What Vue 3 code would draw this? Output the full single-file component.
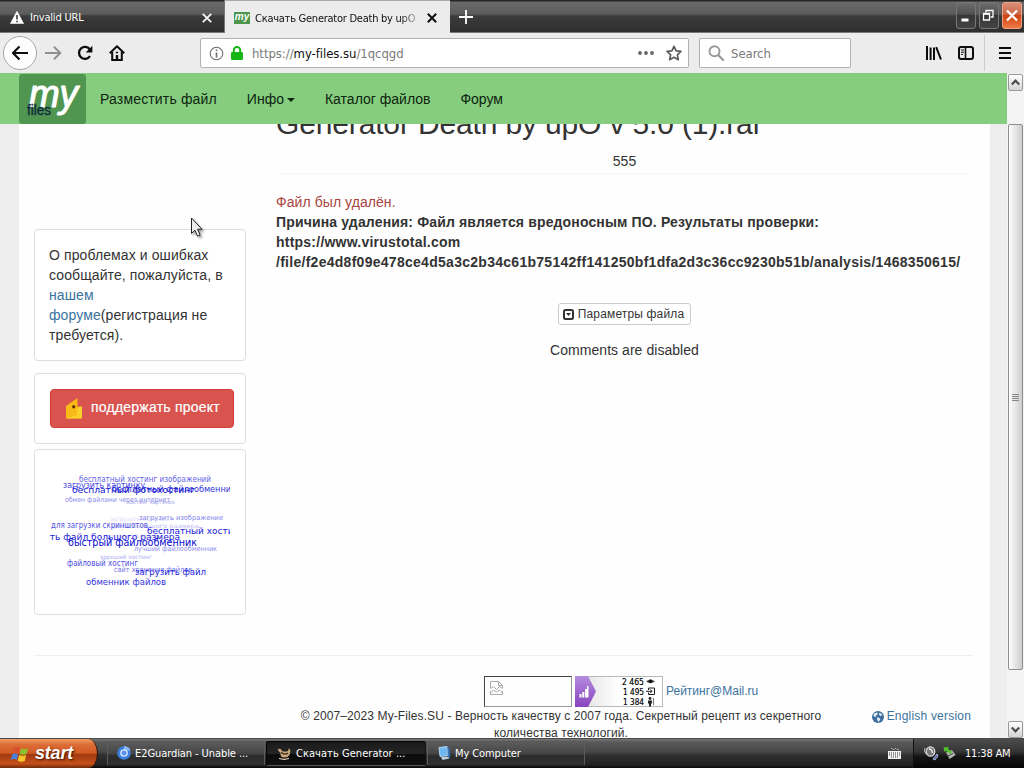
<script setup>
import { ref } from "vue";

const clock = ref("11:38 AM");

const navLinks = [
  { label: "Разместить файл" },
  { label: "Инфо", dropdown: true },
  { label: "Каталог файлов" },
  { label: "Форум" },
];

// tag cloud, far tags first
const tags = [
  { text: "загрузить скриншот", x: 60, y: 56, w: 62, size: 6, color: "#dcdcfb" },
  { text: "файл большого размера", x: 62, y: 63, w: 87, size: 6, color: "#bcbcf3" },
  { text: "хостинг файлов", x: 56, y: 73, w: 52, size: 6, color: "#d2d2f9" },
  { text: "хороший хостинг", x: 50, y: 94, w: 52, size: 6, color: "#b0b0ee" },
  { text: "хостинг картинок", x: 77, y: 39, w: 48, size: 6, color: "#a4a4e6" },
  { text: "обмен файлами через интернет", x: 15, y: 37, w: 105, size: 7, color: "#8c8cea" },
  { text: "загрузить изображение", x: 89, y: 55, w: 84, size: 7, color: "#8585ea" },
  { text: "лучший файлообменник", x: 84, y: 86, w: 83, size: 7, color: "#8c8cec" },
  { text: "сайт хранения файлов", x: 64, y: 107, w: 78, size: 7.5, color: "#7474e8" },
  { text: "бесплатный хостинг изображений", x: 29, y: 17, w: 132, size: 8, color: "#6464e8" },
  { text: "загрузить картинку", x: 13, y: 23, w: 82, size: 8, color: "#4646e4" },
  { text: "для загрузки скриншотов", x: 1, y: 63, w: 97, size: 8, color: "#5252e4" },
  { text: "файловый хостинг", x: 17, y: 101, w: 71, size: 8, color: "#4d4de6" },
  { text: "обменник файлов", x: 36, y: 120, w: 80, size: 9, color: "#3232e0" },
  { text: "бесплатный файлообменник", x: 62, y: 27, w: 124, size: 8.5, color: "#3030dd" },
  { text: "бесплатный хостинг", x: 97, y: 69, w: 97, size: 9, color: "#2020dc" },
  { text: "загрузить файл", x: 85, y: 110, w: 71, size: 9, color: "#1c1cdd" },
  { text: "загрузить файл большого размера", x: -37, y: 75, w: 167, size: 9.5, color: "#2020d8" },
  { text: "бесплатный фотохостинг", x: 22, y: 28, w: 123, size: 9.5, color: "#1010cc" },
  { text: "быстрый файлообменник", x: 18, y: 81, w: 129, size: 10, color: "#0808d0" },
];
</script>

<template>
  <div class="desktop">
    <!-- tabs -->
    <div class="tabbar">
      <div class="tab tab-idle">
        <svg class="tab-warn" width="14" height="13" viewBox="0 0 14 13">
          <path d="M7 .3 13.6 12.6H.4z" fill="#fff" stroke="#fff" stroke-width=".6" stroke-linejoin="round" />
          <path d="M7 4v4.5M7 9.7v1.6" stroke="#444" stroke-width="1.7" />
        </svg>
        <span class="tab-title">Invalid URL</span>
        <svg class="tab-close" width="10" height="10" viewBox="0 0 10 10">
          <path d="m.8.8 8.4 8.4M9.2.8.8 9.2" stroke="#fff" stroke-width="1.7" />
        </svg>
      </div>
      <div class="tab tab-active">
        <span class="favicon">my</span>
        <span class="tab-title fade">Скачать Generator Death by upO</span>
        <svg class="tab-close" width="10" height="10" viewBox="0 0 10 10">
          <path d="m.8.8 8.4 8.4M9.2.8.8 9.2" stroke="#111" stroke-width="2" />
        </svg>
      </div>
      <svg class="tab-new" width="14" height="14" viewBox="0 0 14 14">
        <path d="M7 0v14M0 7h14" stroke="#fff" stroke-width="1.8" />
      </svg>
      <div class="win-buttons">
        <span class="win-btn">
          <svg width="18" height="25" viewBox="0 0 18 25"><path d="M4.500 17h7" stroke="#fff" stroke-width="3" /></svg>
        </span>
        <span class="win-btn">
          <svg width="18" height="25" viewBox="0 0 18 25" fill="none" stroke="#fff">
            <path d="M3.500 10.500h6v6.500h-6z" stroke-width="1.300" />
            <path d="M3 11h7" stroke-width="1.600" />
            <path d="M6 9.500V7.500h7v6.500H10.500" stroke-width="1.300" />
          </svg>
        </span>
        <span class="win-btn win-close">
          <svg width="18" height="25" viewBox="0 0 18 25"><path d="m4 7.500 10 10M14 7.500l-10 10" stroke="#fff" stroke-width="2.200" /></svg>
        </span>
      </div>
    </div>

    <!-- toolbar -->
    <div class="toolbar">
      <div class="back">
        <svg width="18" height="16" viewBox="0 0 18 16" fill="none" stroke="#0c0c0d" stroke-width="2.200">
          <path d="M17 8H2.500M8.500 1.500 2 8l6.500 6.500" stroke-linejoin="round" />
        </svg>
      </div>
      <svg class="forward" width="17" height="16" viewBox="0 0 17 16" fill="none" stroke="#919191" stroke-width="2">
        <path d="M0 8h15M9 1.700 15.300 8 9 14.300" />
      </svg>
      <svg class="reload" width="16" height="16" viewBox="0 0 16 16" fill="none" stroke="#0c0c0d" stroke-width="2.300">
        <path d="M13 11.200A6 6 0 1 1 13 4.500" />
        <path d="M15.400 .8v6.700H8.700z" fill="#0c0c0d" stroke="none" />
      </svg>
      <svg class="home" width="16" height="16" viewBox="0 0 16 16" fill="none" stroke="#0c0c0d" stroke-width="2">
        <path d="M.8 8.200 8 1.200l7.200 7" stroke-linejoin="round" />
        <path d="M3.200 7v8h9.600V7" />
        <path d="M8 10v5" stroke-width="2.400" />
        <path d="M6.800 7.500h2.400" stroke-width="1.500" />
      </svg>
      <div class="urlbar">
        <svg width="15" height="15" viewBox="0 0 15 15" fill="none" stroke="#6d6d6d">
          <circle cx="7.500" cy="7.500" r="6.300" stroke-width="1.100" />
          <path d="M7.500 6.400v5M7.500 3.500v1.600" stroke-width="1.600" />
        </svg>
        <svg class="lock" width="12" height="14" viewBox="0 0 12 14">
          <rect y="6" width="12" height="8" rx="1.200" fill="#16b616" />
          <path d="M2.800 7V4.200a3.200 3.200 0 0 1 6.400 0V7" fill="none" stroke="#16b616" stroke-width="2" />
        </svg>
        <span class="url">https://<b>my-files.su</b>/1qcqgd</span>
        <svg class="dots" width="16" height="4" viewBox="0 0 16 4" fill="#666">
          <circle cx="2" cy="2" r="1.900" /><circle cx="8" cy="2" r="1.900" /><circle cx="14" cy="2" r="1.900" />
        </svg>
        <svg width="16" height="16" viewBox="0 0 16 16">
          <path d="m8 1.300 2.100 4.500 4.800.6-3.500 3.400.9 4.900L8 12.300l-4.300 2.400.9-4.900L1.100 6.400l4.800-.6z" fill="none" stroke="#5c5c5c" stroke-width="1.700" stroke-linejoin="round" />
        </svg>
      </div>
      <div class="searchbar">
        <svg width="17" height="17" viewBox="0 0 17 17" fill="none" stroke="#999">
          <circle cx="6.500" cy="6.300" r="5" stroke-width="1.900" />
          <path d="m10.200 10 5.500 5.500" stroke-width="2.300" />
        </svg>
        <span>Search</span>
      </div>
      <div class="tools">
        <svg width="16" height="14" viewBox="0 0 16 14" stroke="#0c0c0d" stroke-width="2">
          <path d="M1 0v14M4.600 1.500V14M8 1.500V14M10.200 1.200 15 13.500" />
        </svg>
        <svg class="reader" width="16" height="14" viewBox="0 0 16 14" fill="none" stroke="#0c0c0d">
          <rect x="1" y="1" width="14" height="12" rx="2" stroke-width="2" />
          <path d="M7.500 1v12" stroke-width="1.600" />
          <path d="M3 4h3M3 6.200h3M3 8.400h2" stroke-width="1" />
        </svg>
        <span class="divider"></span>
        <svg width="12" height="12" viewBox="0 0 12 12" stroke="#0c0c0d" stroke-width="2">
          <path d="M0 1h12M0 6h12M0 11h12" />
        </svg>
      </div>
    </div>

    <!-- page -->
    <div class="viewport">
      <div class="page">
        <nav class="navbar">
          <div class="logo">
            <svg width="67" height="50" viewBox="0 0 67 50">
              <text x="10" y="33" class="logo-my" textLength="49" lengthAdjust="spacingAndGlyphs">my</text>
              <text x="8" y="41" class="logo-files" textLength="24" lengthAdjust="spacingAndGlyphs">files</text>
            </svg>
          </div>
          <a v-for="link in navLinks" :key="link.label" class="nav-link">
            {{ link.label }}<i v-if="link.dropdown" class="caret"></i>
          </a>
        </nav>

        <div class="container">
          <div class="columns">
            <aside class="sidebar">
              <div class="card note">
                О проблемах и ошибках сообщайте, пожалуйста, в <a>нашем форуме</a>(регистрация не требуется).
              </div>
              <div class="card donate">
                <div class="btn-donate">
                  <svg width="18" height="23" viewBox="0 0 18 23">
                    <path d="M1 9 12.500 1v9H17v11.500H1z" fill="#f9b916" />
                    <path d="M12.500 10 17 9.300V21l-4.500.5H1L12 18z" fill="#fbd02b" />
                    <ellipse cx="8.700" cy="9.700" rx="1.500" ry="1.800" fill="#5a2c08" />
                  </svg>
                  <span>поддержать проект</span>
                </div>
              </div>
              <div class="card cloud">
                <svg width="180" height="134" viewBox="0 0 180 134">
                  <text
                    v-for="tag in tags"
                    :key="tag.text"
                    :x="tag.x"
                    :y="tag.y"
                    :textLength="tag.w"
                    :font-size="tag.size"
                    :fill="tag.color"
                    lengthAdjust="spacingAndGlyphs"
                  >{{ tag.text }}</text>
                </svg>
              </div>
            </aside>
            <main class="content">
              <h2>Generator Death by upO v 5.0 (1).rar</h2>
              <div class="count"><span>555</span></div>
              <p class="reason">
                <span class="danger">Файл был удалён.</span><br />
                <b class="why">Причина удаления: Файл является вредоносным ПО. Результаты проверки:</b><br />
                <b class="host">https://www.virustotal.com</b><br />
                <b class="path">/file/f2e4d8f09e478ce4d5a3c2b34c61b75142ff141250bf1dfa2d3c36cc9230b51b/analysis/1468350615/</b>
              </p>
              <div class="btn-params">
                <svg width="11" height="11" viewBox="0 0 11 11">
                  <rect x="1" y="1" width="9" height="9" rx="1.500" fill="none" stroke="#333" stroke-width="2" />
                  <path d="M3 4h5L5.500 7z" fill="#333" />
                </svg>
                Параметры файла
              </div>
              <p class="comments">Comments are disabled</p>
            </main>
          </div>
          <footer class="footer">
            <div class="footer-center">
              <div class="counters">
                <div class="broken">
                  <svg width="13" height="14" viewBox="0 0 13 14" fill="none" stroke="#aaa">
                    <path d="M.5 7V.5h8l4 4V7M8.500.5v4h4M.5 7.500l3-2 3 3 3-3 3 2M.5 12l3-3 3 2 3-2 3 3M.5 10v3.500h12V10" />
                  </svg>
                </div>
                <svg class="rating" width="88" height="31" viewBox="0 0 88 31">
                  <defs>
                    <linearGradient id="violet" x2="0" y2="1">
                      <stop offset="0" stop-color="#b48ce0" /><stop offset="1" stop-color="#8843bd" />
                    </linearGradient>
                    <linearGradient id="silver" x2="1" y2="0">
                      <stop offset="0" stop-color="#dedede" /><stop offset=".5" stop-color="#fff" />
                    </linearGradient>
                  </defs>
                  <rect x=".5" y=".5" width="87" height="30" fill="url(#silver)" stroke="#b8b8b8" />
                  <path d="M0 0h13l8 15.500L13 31H0z" fill="url(#violet)" />
                  <path d="M4.500 18h2v3.500h-2zM7.300 16h2v5.500h-2zM10.100 13h2v8.500h-2zM12 10h1.500v11.500H12z" fill="#fff" />
                  <g class="rating-num">
                    <text x="47" y="9" textLength="22" lengthAdjust="spacingAndGlyphs">2 465</text>
                    <text x="48" y="19" textLength="21" lengthAdjust="spacingAndGlyphs">1 495</text>
                    <text x="48" y="29" textLength="21" lengthAdjust="spacingAndGlyphs">1 384</text>
                  </g>
                  <path d="M71 5.500q4.500-4 9 0-4.500 3.500-9 0z" fill="#555" />
                  <circle cx="75.500" cy="5.200" r="1.800" fill="#111" />
                  <path d="M73.500 14v-2h6v6.500h-6v-2M71 15.300h6M75 13.300l2 2-2 2" fill="none" stroke="#222" />
                  <circle cx="75" cy="22.500" r="1.400" fill="#222" />
                  <path d="M73 24.500h4v3h-1v3h-2v-3h-1z" fill="#222" />
                  <path d="M78.500 22v7" stroke="#777" />
                </svg>
                <a>Рейтинг@Mail.ru</a>
              </div>
              <div class="copyright">© 2007–2023 My-Files.SU - Верность качеству с 2007 года. Секретный рецепт из секретного количества технологий.</div>
            </div>
            <a class="lang">
              <svg width="12" height="12" viewBox="0 0 12 12">
                <circle cx="6" cy="6" r="6" fill="#3c6f9d" />
                <path d="m2 2.500 3-1 1.200 1.300-1.500 1-.5 1.500L2.500 6 1.500 4.500zM7.500 1.500l3 2.500-1.800 1-1.700-1zM5 6.300l2.500.7.800 1.500L6.500 11 5.200 9z" fill="#e5f0f7" />
              </svg>
              English version
            </a>
          </footer>
        </div>
      </div>
      <div class="scrollbar">
        <div class="scroll-btn">
          <svg width="9" height="7" viewBox="0 0 9 7"><path d="m.8 5.500 3.700-3.800 3.700 3.800" fill="none" stroke="#4b4b4b" stroke-width="2.200" /></svg>
        </div>
        <div class="thumb"><i></i><i></i><i></i><i></i></div>
        <div class="scroll-btn scroll-down">
          <svg width="9" height="7" viewBox="0 0 9 7"><path d="m.8 1.500 3.700 3.800 3.700-3.800" fill="none" stroke="#4b4b4b" stroke-width="2.200" /></svg>
        </div>
      </div>
    </div>

    <!-- taskbar -->
    <div class="taskbar">
      <div class="start">
        <svg width="20" height="18" viewBox="0 0 20 18">
          <path d="M4 3q3-2 6 0L8.500 8.300q-3-1.800-6 0z" fill="#d9512c" />
          <path d="M11 3.500q3 1.500 7 0L16.500 9q-3.500 1.500-7 0z" fill="#8cc12f" />
          <path d="M2.200 9.500q3-1.800 6 0L6.800 15q-3-1.800-6.200 0z" fill="#4c7ed8" />
          <path d="M9.200 10q3.500 1.600 7 0L14.800 16q-3.700 1.500-7.200-.3z" fill="#f4c528" />
        </svg>
        <span>start</span>
      </div>
      <div class="task">
        <svg width="14" height="14" viewBox="0 0 14 14">
          <circle cx="7" cy="7" r="6.800" fill="#3d7ddb" />
          <path d="M7 0a7 7 0 0 1 6.500 4.500H7z" fill="#89b7f7" />
          <circle cx="7" cy="7" r="3.200" fill="#5c93ea" stroke="#dce9ff" stroke-width="1.300" />
        </svg>
        <span class="t1">E2Guardian - Unable ...</span>
      </div>
      <div class="task task-active">
        <svg width="15" height="14" viewBox="0 0 15 14" fill="none">
          <path d="M1 3q3-1 4 2 3 1 6 0l1-3 1.500 3-1 4q-2 3-6 2.500Q3 11 3.500 7 1 5.500 1 3z" fill="#c9a77c" />
          <path d="M4 6.500q4 3 7 .5M4 11.500q3 2.500 7 0" stroke="#3c2716" stroke-width="1.400" />
          <path d="M2 12.500q5 2 10 0" stroke="#efe0ca" />
        </svg>
        <span class="t2">Скачать Generator ...</span>
      </div>
      <div class="task task-computer">
        <svg width="13" height="15" viewBox="0 0 13 15">
          <path d="m1 1.500 8-1 1 9-8 1z" fill="#6db9f3" stroke="#c8e3fa" stroke-width=".8" />
          <path d="m9.500 1 2 1 .5 9-2 2z" fill="#3575b8" />
          <path d="m3 11 6-.5 2.500 2-7 1.500z" fill="#bcd0e5" />
        </svg>
        <span class="t3">My Computer</span>
      </div>
      <svg class="keyboard" width="13" height="12" viewBox="0 0 13 12">
        <path d="M3 1.500h1l1 1h1l1-1h1l1 1h2" fill="none" stroke="#ccc" stroke-width=".7" />
        <rect y="4" width="13" height="8" fill="#f2f2f2" />
        <path d="M1 6h11M1 8h11M3 10h7" stroke="#333" stroke-dasharray="1 1" />
      </svg>
      <div class="tray">
        <svg width="15" height="15" viewBox="0 0 15 15" fill="none">
          <ellipse cx="6.500" cy="5.500" rx="4.300" ry="4.700" fill="#777" stroke="#ddd" stroke-width="1.200" />
          <path d="M5 3q3 0 3.500 4" stroke="#eee" stroke-width="1.300" />
          <path d="M1 2Q-.5 5 2 8" stroke="#bbb" />
          <path d="m9 13 4-5 1 2-3 4z" fill="#5864b4" stroke="#d9def8" stroke-width=".7" />
        </svg>
        <svg width="13" height="14" viewBox="0 0 13 14">
          <path d="m3 6 6-2 3.500 5-6 4z" fill="#b9c0b6" stroke="#636a60" stroke-width=".7" />
          <path d="m5 10 5-2.500" stroke="#333" />
          <path d="M.5 1.500 6 .8 4.800 2.500 9 6 7 8 3 4.500 1.500 6z" fill="#4ec12d" />
        </svg>
        <span>{{ clock }}</span>
      </div>
    </div>

    <svg class="cursor" width="13" height="22" viewBox="0 0 13 22">
      <path d="M1.500 1v15.500l3.400-3.300 2.600 6 2.600-1.200-2.500-5.700H12z" fill="#eee" stroke="#222" />
    </svg>
  </div>
</template>

<style>
body {
  margin: 0;
  overflow: hidden;
}
</style>

<style scoped>
.desktop {
  position: relative;
  width: 1024px;
  height: 768px;
  overflow: hidden;
  font-family: "Liberation Sans", Arial, sans-serif;
  color: #333;
}

.desktop * {
  box-sizing: border-box;
}

svg {
  display: block;
  flex: none;
}

/* ---- tabs ---- */
.tabbar {
  display: flex;
  align-items: center;
  height: 33px;
  background: linear-gradient(#252525 0, #252525 1px, #696969 2px, #5c5c5c 14px, #3c3c3c 16px, #2e2e2e 32px, #c5c5c5 33px);
}

.tab {
  display: flex;
  align-items: center;
  height: 33px;
  font: 11px "DejaVu Sans Condensed", "DejaVu Sans", sans-serif;
  white-space: nowrap;
}

.tab-idle {
  width: 225px;
  padding: 2px 12px 0 10px;
  color: #fff;
  border-right: 1px solid #777;
}

.tab-idle .tab-title {
  margin-left: 6px;
  letter-spacing: -0.2px;
}

.tab-active {
  width: 225px;
  padding: 2px 13px 0 9px;
  background: #ececec;
  border-top: 1px solid #aaa;
  color: #111;
}

.favicon {
  width: 16px;
  height: 12px;
  margin-right: 5px;
  background: #4b964c;
  color: #fff;
  font: italic bold 10px/9px "Liberation Sans", sans-serif;
  text-align: center;
}

.fade {
  width: 165px;
  overflow: hidden;
  letter-spacing: -0.25px;
  -webkit-mask-image: linear-gradient(90deg, #000 145px, transparent 168px);
  mask-image: linear-gradient(90deg, #000 145px, transparent 168px);
}

.tab-close {
  margin-left: auto;
}

.tab-new {
  margin-left: 9px;
}

.win-buttons {
  display: flex;
  gap: 3px;
  margin: 0 2px 2px auto;
}

.win-btn {
  width: 20px;
  height: 27px;
  border: 1px solid #777;
  border-radius: 3px;
  background: linear-gradient(#6c6c6c, #505050 45%, #363636 50%, #444);
}

.win-close {
  border-color: #f0a080;
  background: linear-gradient(#d98f78, #cc6848 45%, #cd4313 50%, #ee7a45);
}

/* ---- toolbar ---- */
.toolbar {
  display: flex;
  align-items: center;
  height: 40px;
  padding: 0 13px 0 3px;
  background: #ececec;
  font: 13px "DejaVu Sans Condensed", "DejaVu Sans", sans-serif;
}

.back {
  display: flex;
  align-items: center;
  justify-content: center;
  width: 34px;
  height: 34px;
  border: 1px solid #a8a8a8;
  border-radius: 50%;
  background: #fdfdfd;
}

.forward {
  margin-left: 8px;
}

.reload {
  margin-left: 15px;
}

.home {
  margin-left: 16px;
}

.urlbar,
.searchbar {
  display: flex;
  align-items: center;
  height: 30px;
  border: 1px solid #b1b1b1;
  border-radius: 2px;
  background: #fff;
  color: #7a7a7a;
}

.urlbar {
  width: 489px;
  margin-left: 75px;
  padding: 0 6px 0 8px;
}

.lock {
  margin: 0 9px 1px 7px;
}

.url {
  letter-spacing: -0.05px;
}

.url b {
  font-weight: normal;
  color: #111;
}

.dots {
  margin: 0 12px 0 auto;
}

.searchbar {
  width: 152px;
  margin-left: 10px;
  padding-left: 8px;
}

.searchbar span {
  margin-left: 6px;
  letter-spacing: -0.05px;
}

.tools {
  display: flex;
  align-items: center;
  margin-left: auto;
}

.reader {
  margin: 0 10px 0 16px;
}

.divider {
  width: 1px;
  height: 36px;
  margin-right: 14px;
  background: #ccc;
}

/* ---- page ---- */
.viewport {
  display: flex;
  height: 665px;
}

.page {
  position: relative;
  width: 1007px;
  overflow: hidden;
  background: #eee;
  font-size: 14px;
  line-height: 20px;
}

.page a {
  color: #3a739f;
}

/* fixed over the scrolled content */
.navbar {
  position: absolute;
  top: 0;
  left: 0;
  z-index: 1;
  display: flex;
  align-items: center;
  width: 100%;
  height: 51px;
  padding-left: 19px;
  background: #86cd80;
}

.logo {
  width: 67px;
  height: 50px;
  margin-right: -1px;
  border-radius: 3px;
  background: #509650;
}

.logo-my {
  font: italic 38px "Liberation Sans", sans-serif;
  fill: #fff;
  stroke: #fff;
  stroke-width: 1.2px;
  stroke-linejoin: round;
}

.logo-files {
  font: 14px "Liberation Sans", sans-serif;
  fill: #102d3e;
  stroke: #102d3e;
  stroke-width: 0.4px;
}

.page .nav-link {
  display: flex;
  align-items: center;
  padding: 0 15px 0 15px;
  color: #0d240d;
}

.page .nav-link:first-of-type {
  letter-spacing: 0.16px;
}

.caret {
  margin: 3px 0 0 3px;
  border: 4px solid transparent;
  border-top-color: #0d240d;
  border-bottom: 0;
}

.container {
  width: 971px;
  height: 665px;
  margin-left: 19px;
  padding: 0 17px 0 15px;
  background: #fefefe;
}

.columns {
  display: flex;
  gap: 30px;
  height: 582px;
}

.sidebar {
  width: 212px;
  padding-top: 156px;
}

.card {
  border: 1px solid #ddd;
  border-radius: 4px;
  padding: 15px;
  background: #fff;
}

.note {
  height: 132px;
  margin-bottom: 12px;
  padding-left: 14px;
  letter-spacing: 0.1px;
}

.donate {
  height: 71px;
  margin-bottom: 5px;
}

.btn-donate {
  display: flex;
  align-items: center;
  gap: 8px;
  width: 184px;
  height: 39px;
  padding-left: 14px;
  border: 1px solid #d43f3a;
  border-radius: 4px;
  background: #d9534f;
  color: #fff;
  white-space: nowrap;
  letter-spacing: 0.23px;
  -webkit-text-stroke: 0.2px #fff;
}

.btn-donate span {
  padding-bottom: 3px;
}

.cloud {
  height: 166px;
}

.cloud text {
  font-family: "DejaVu Sans", sans-serif;
}

.content {
  display: flex;
  flex-direction: column;
  align-items: center;
  width: 697px;
  padding-top: 34px;
}

.content h2 {
  align-self: flex-start;
  margin: 0;
  font-size: 30px;
  font-weight: normal;
  line-height: 33px;
  letter-spacing: -0.15px;
}

.count {
  width: 688px;
  height: 34px;
  margin: 11px 0 18px;
  text-align: center;
  background: linear-gradient(#f5f5f5, #f5f5f5) 0 22px / 100% 1px no-repeat;
}

.count span {
  display: inline-block;
  padding: 0 6px;
  background: #fefefe;
}

.reason {
  align-self: flex-start;
  height: 80px;
  margin: -11px 0 31px;
  white-space: nowrap;
}

.danger {
  color: #a94442;
  letter-spacing: 0.07px;
}

.why {
  letter-spacing: 0.15px;
}

.host {
  letter-spacing: 0.23px;
}

.path {
  letter-spacing: 0.276px;
}

.btn-params {
  display: flex;
  align-items: center;
  gap: 4px;
  height: 22px;
  padding: 0 6px 0 4px;
  border: 1px solid #ccc;
  border-radius: 3px;
  background: #fff;
  font-size: 12px;
  letter-spacing: 0.15px;
}

.comments {
  margin: 15px 0 0;
  letter-spacing: 0.05px;
}

.footer {
  display: flex;
  height: 83px;
  padding-top: 20px;
  border-top: 1px solid #eee;
  font-size: 12px;
  line-height: 17px;
}

.footer-center {
  width: 556px;
  margin-left: 249px;
}

.counters {
  display: flex;
  align-items: center;
  gap: 3px;
  height: 31px;
  margin-left: 201px;
}

.broken {
  width: 88px;
  height: 31px;
  padding: 4px 5px;
  border: 1px solid #999;
  border-top-color: #444;
  border-left-color: #444;
}

.rating-num {
  font: 9px "DejaVu Sans", sans-serif;
  fill: #000;
  stroke: #000;
  stroke-width: 0.2px;
}

.copyright {
  padding-top: 1px;
  text-align: center;
  letter-spacing: 0.1px;
}

.lang {
  display: flex;
  align-items: center;
  gap: 3px;
  height: 17px;
  margin: 32px 2px 0 auto;
  white-space: nowrap;
  letter-spacing: 0.2px;
}

/* ---- scrollbar ---- */
.scrollbar {
  display: flex;
  flex-direction: column;
  width: 17px;
  padding: 1px 0 0 1px;
  background: #f3f3f3;
}

.scroll-btn {
  display: flex;
  align-items: center;
  justify-content: center;
  width: 15px;
  height: 17px;
  border: 1px solid #999;
  border-radius: 2px;
  background: linear-gradient(#fff, #d4d4d4);
}

.thumb {
  display: flex;
  flex-direction: column;
  align-items: center;
  justify-content: center;
  gap: 1px;
  width: 15px;
  height: 546px;
  margin-top: 33px;
  border: 1px solid #8e8e8e;
  border-radius: 2px;
  background: linear-gradient(90deg, #fff, #eee 30%, #cdcdcd);
}

.thumb i {
  width: 7px;
  height: 1px;
  background: #888;
}

.scroll-down {
  margin-top: auto;
}

/* ---- taskbar ---- */
.taskbar {
  display: flex;
  align-items: center;
  height: 30px;
  background: linear-gradient(#1e1e1e 0, #777 1px, #5a5a5a 4px, #484848 14px, #303030 17px, #222 27px, #080808);
  font: 11px "DejaVu Sans Condensed", "DejaVu Sans", sans-serif;
  color: #fff;
}

.start {
  display: flex;
  align-items: center;
  gap: 5px;
  width: 98px;
  height: 29px;
  margin: 1px 9px 0 0;
  padding-left: 10px;
  border-right: 1px solid #2b1208;
  border-radius: 0 10px 10px 0 / 0 15px 15px 0;
  background: linear-gradient(#f19b64, #dc6c35 20%, #d25b24 48%, #a13a10 54%, #c4501b 85%, #6f2b0c);
  font: italic bold 18px "Liberation Sans", Arial, sans-serif;
  text-shadow: 1px 1px 2px #401000;
}

.start span {
  letter-spacing: -0.2px;
}

.task {
  display: flex;
  align-items: center;
  gap: 4px;
  width: 158px;
  height: 25px;
  margin-right: 1px;
  padding-left: 9px;
  border: 1px solid #5a5a5a;
  border-bottom-color: #222;
  border-radius: 2px;
  background: linear-gradient(#5c5c5c, #454545 50%, #2c2c2c 60%, #303030);
  white-space: nowrap;
}

.task-active {
  width: 160px;
  border-color: #050505 #111 #555 #050505;
  background: linear-gradient(#1b1b1b, #242424 50%, #0b0b0b 55%, #111);
}

.task-computer {
  padding-left: 10px;
}

.t1 {
  letter-spacing: -0.08px;
}

.t2 {
  letter-spacing: 0;
}

.task-active {
  padding-left: 10px;
}

.t2 {
  letter-spacing: 0.05px;
}

.t3 {
  letter-spacing: -0.1px;
}

.keyboard {
  margin-left: auto;
}

.tray {
  display: flex;
  align-items: center;
  gap: 4px;
  width: 111px;
  height: 29px;
  margin-left: 12px;
  padding-left: 10px;
  border-left: 1px solid #111;
  background: linear-gradient(#4d4d4d, #333 45%, #151515 60%, #050505);
}

.tray span {
  margin-left: 5px;
  white-space: nowrap;
  letter-spacing: -0.2px;
}

.cursor {
  position: absolute;
  top: 217px;
  left: 190px;
  z-index: 2;
  filter: drop-shadow(2px 2px 1px rgba(0, 0, 0, 0.35));
}
</style>
